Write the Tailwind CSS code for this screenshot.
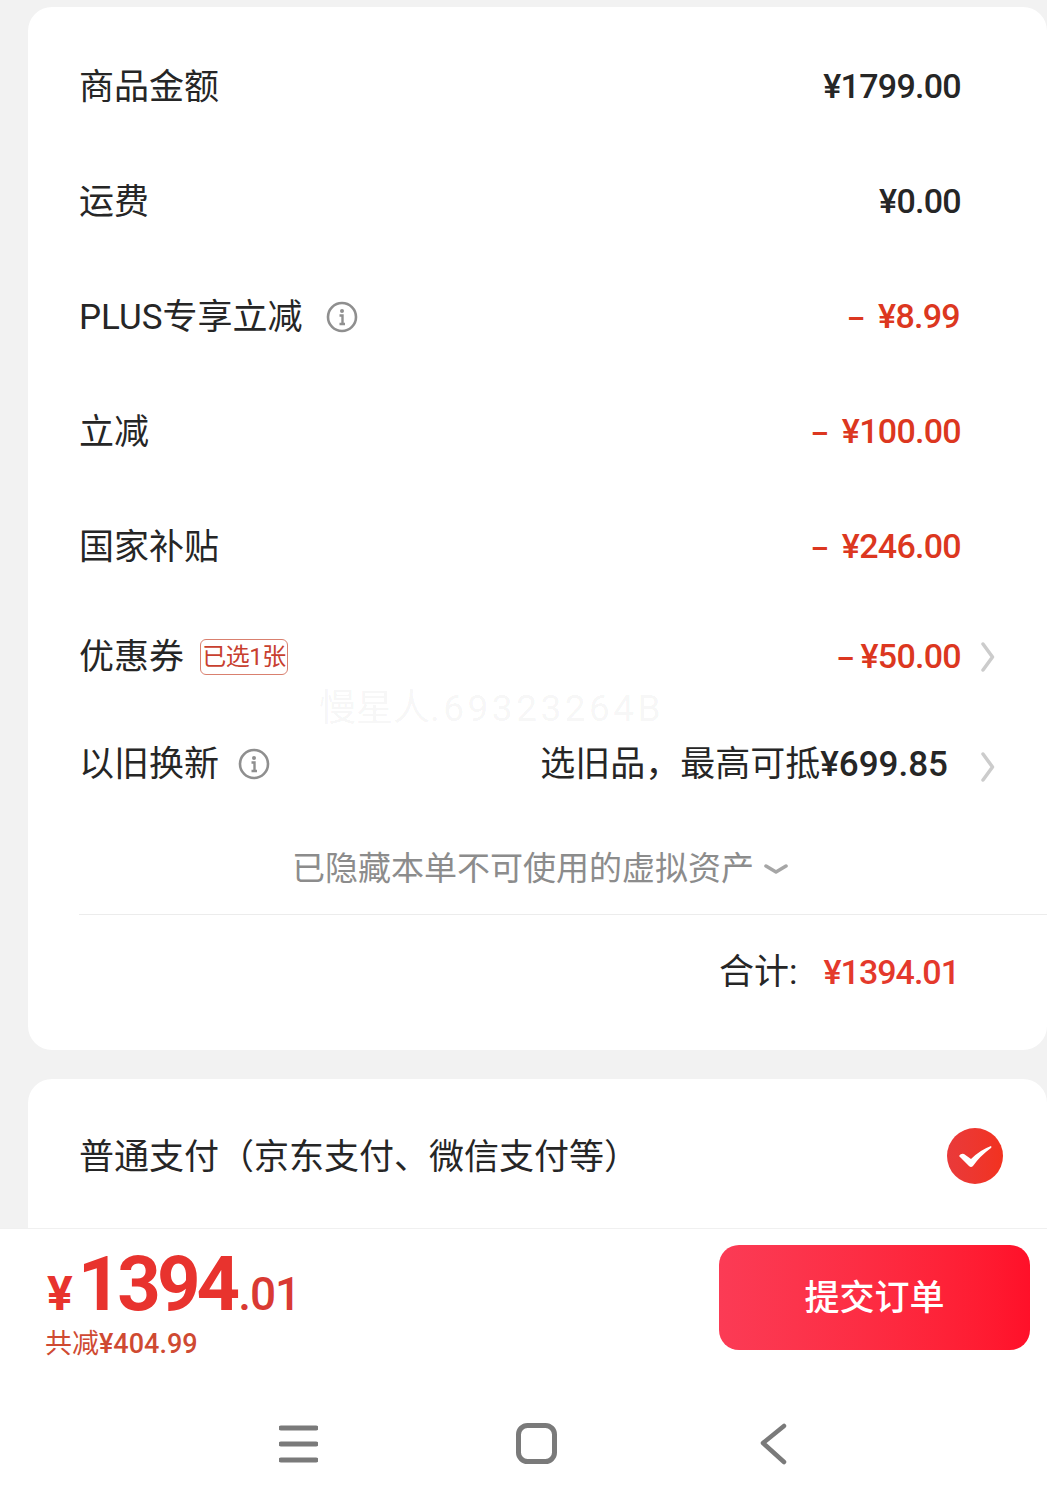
<!DOCTYPE html>
<html lang="zh-CN">
<head>
  <meta charset="UTF-8">
  <meta name="viewport" content="width=device-width, initial-scale=1.0">
  <title>订单结算</title>
  <script src="https://cdn.jsdelivr.net/npm/@tailwindcss/browser@4"></script>
</head>
<body class="bg-white font-['Roboto','Noto_Sans_CJK_SC',sans-serif] text-[#262626]">
  <div class="relative w-[1047px] h-[1512px] overflow-hidden flex flex-col">
    <!-- 内容区 -->
    <main class="h-[1228px] shrink-0 overflow-hidden bg-[#f2f2f2] pt-[7px] pl-[28px]">
      <!-- 金额明细 -->
      <section class="bg-white rounded-[24px] h-[1043px] pt-[22px] pl-[51px]">
        <div class="h-[115px] flex items-center justify-between pr-[86px]">
          <span class="mt-[4px] text-[35px]">商品金额</span>
          <span class="text-[34px] font-medium tracking-[-0.7px]">¥1799.00</span>
        </div>
        <div class="h-[115px] flex items-center justify-between pr-[86px]">
          <span class="mt-[4px] text-[35px]">运费</span>
          <span class="text-[34px] font-medium tracking-[-0.7px]">¥0.00</span>
        </div>
        <div class="h-[115px] flex items-center justify-between pr-[87px]">
          <span class="flex items-center gap-[24px]">
            <span class="mt-[4px] text-[35px]">PLUS专享立减</span>
            <svg class="w-[32px] h-[32px] text-[#8f8f8f]" viewBox="0 0 32 32" fill="none">
              <circle cx="16" cy="16" r="14" stroke="currentColor" stroke-width="2.6"/>
              <circle cx="16" cy="10" r="2" fill="currentColor"/>
              <path d="M13.5 14.5H16.5V22.5M13.5 23H19" stroke="currentColor" stroke-width="2.4"/>
            </svg>
          </span>
          <span class="text-[34px] font-medium tracking-[-0.7px] text-[#dc3720]"><span class="text-[28px] font-bold mr-[14px]">–</span>¥8.99</span>
        </div>
        <div class="h-[115px] flex items-center justify-between pr-[86px]">
          <span class="mt-[4px] text-[35px]">立减</span>
          <span class="text-[34px] font-medium tracking-[-0.7px] text-[#dc3720]"><span class="text-[28px] font-bold mr-[14px]">–</span>¥100.00</span>
        </div>
        <div class="h-[115px] flex items-center justify-between pr-[86px]">
          <span class="mt-[4px] text-[35px]">国家补贴</span>
          <span class="text-[34px] font-medium tracking-[-0.7px] text-[#dc3720]"><span class="text-[28px] font-bold mr-[14px]">–</span>¥246.00</span>
        </div>
        <div class="h-[105px] flex items-center justify-between pr-[52px]">
          <span class="flex items-center gap-[16px]">
            <span class="mt-[4px] text-[35px]">优惠券</span>
            <span class="h-[36px] w-[88px] flex items-center justify-center border border-[#d9806f] rounded-[6px] text-[24px] text-[#c8402f] tracking-[-0.5px]">已选1张</span>
          </span>
          <span class="flex items-center gap-[20px]">
            <span class="text-[34px] font-medium tracking-[-0.7px] text-[#dc3720]"><span class="text-[28px] font-bold mr-[7px]">–</span>¥50.00</span>
            <svg class="w-[14px] h-[30px] text-[#cccccc]" viewBox="0 0 14 30" fill="none">
              <path d="M2 2L11.5 15L2 28" stroke="currentColor" stroke-width="3.5" stroke-linecap="round" stroke-linejoin="round"/>
            </svg>
          </span>
        </div>
        <div class="h-[109px] flex items-center justify-between pr-[52px]">
          <span class="flex items-center gap-[19px]">
            <span class="mt-[4px] text-[35px]">以旧换新</span>
            <svg class="w-[32px] h-[32px] text-[#8f8f8f]" viewBox="0 0 32 32" fill="none">
              <circle cx="16" cy="16" r="14" stroke="currentColor" stroke-width="2.6"/>
              <circle cx="16" cy="10" r="2" fill="currentColor"/>
              <path d="M13.5 14.5H16.5V22.5M13.5 23H19" stroke="currentColor" stroke-width="2.4"/>
            </svg>
          </span>
          <span class="flex items-center gap-[33px]">
            <span class="mt-[4px] text-[35px]">选旧品，最高可抵<span class="font-medium">¥699.85</span></span>
            <svg class="mt-[6px] w-[14px] h-[30px] text-[#cccccc]" viewBox="0 0 14 30" fill="none">
              <path d="M2 2L11.5 15L2 28" stroke="currentColor" stroke-width="3.5" stroke-linecap="round" stroke-linejoin="round"/>
            </svg>
          </span>
        </div>
        <div class="h-[97px] pt-[6px] flex items-center justify-center gap-[10px] border-b border-[#ececec] pr-[46px]">
          <span class="text-[33px] text-[#8c8c8c]">已隐藏本单不可使用的虚拟资产</span>
          <svg class="w-[24px] h-[12px] text-[#a6a6a6]" viewBox="0 0 24 12" fill="none">
            <path d="M2 3L12 9L22 3" stroke="currentColor" stroke-width="3.5" stroke-linecap="round" stroke-linejoin="round"/>
          </svg>
        </div>
        <div class="h-[115px] flex items-center justify-end gap-[26px] pr-[88px]">
          <span class="mt-[2px] text-[35px]">合计:</span>
          <span class="text-[34px] font-medium tracking-[-1px] text-[#e4392c]">¥1394.01</span>
        </div>
      </section>

      <!-- 支付方式 -->
      <section class="mt-[29px] bg-white rounded-[24px] h-[200px] pl-[51px] pr-[44px] pt-[34px]">
        <div class="flex items-center justify-between h-[86px]">
          <span class="mt-[4px] text-[35px]">普通支付（京东支付、微信支付等）</span>
          <span class="w-[56px] h-[56px] rounded-full bg-gradient-to-r from-[#e93a3a] to-[#f2321f] flex items-center justify-center">
            <svg class="w-[34px] h-[23px]" viewBox="0 0 34 23" fill="white">
              <path d="M1 11Q3 8 6 9L13 14Q22 5 33 1Q34 2 33 3Q22 11 15 21Q13 23 11 21Z"/>
            </svg>
          </span>
        </div>
      </section>
    </main>

    <!-- 底部结算栏 -->
    <footer class="h-[134px] shrink-0 bg-white border-t border-[#f0f0f0] flex items-start justify-between pl-[45px] pr-[17px]">
      <div class="text-[#e8332e]">
        <div class="flex items-baseline h-[100px] pt-[17px] pl-[2px]">
          <span class="text-[48px] leading-none font-bold mr-[5px]">¥</span>
          <span class="text-[76px] leading-[76px] font-bold tracking-[-4px]">1394</span>
          <span class="ml-[2px] text-[46px] leading-none font-medium tracking-[-1px] text-[#d93a33]">.01</span>
        </div>
        <div class="text-[27px] leading-[30px] text-[#cf4a32] font-medium"><span class="font-normal">共减</span>¥404.99</div>
      </div>
      <button class="mt-[16px] pt-[3px] w-[311px] h-[105px] rounded-[20px] bg-gradient-to-r from-[#fb3b55] to-[#ff1029] text-white text-[35px] font-medium">提交订单</button>
    </footer>

    <!-- 系统导航栏 -->
    <nav class="flex-1 bg-white flex items-start pl-[279px] pt-[61px]">
      <svg class="mt-[1px] w-[39px] h-[40px] text-[#7a7a7a]" viewBox="0 0 39 40" fill="none">
        <path d="M2 4H37M2 20H37M2 36H37" stroke="currentColor" stroke-width="5" stroke-linecap="round"/>
      </svg>
      <svg class="ml-[198px] w-[41px] h-[41px] text-[#7a7a7a]" viewBox="0 0 41 41" fill="none">
        <rect x="2.5" y="2.5" width="36" height="36" rx="9" stroke="currentColor" stroke-width="5"/>
      </svg>
      <svg class="ml-[202px] w-[28px] h-[42px] text-[#7a7a7a]" viewBox="0 0 28 42" fill="none">
        <path d="M25 3L4 20L25 39" stroke="currentColor" stroke-width="4.5" stroke-linecap="round" stroke-linejoin="round"/>
      </svg>
    </nav>

    <!-- 水印 -->
    <div class="absolute left-[319px] top-[681px] text-[37px] text-black/5 pointer-events-none">慢星人<span class="tracking-[3.5px]">.69323264B</span></div>
  </div>
</body>
</html>
